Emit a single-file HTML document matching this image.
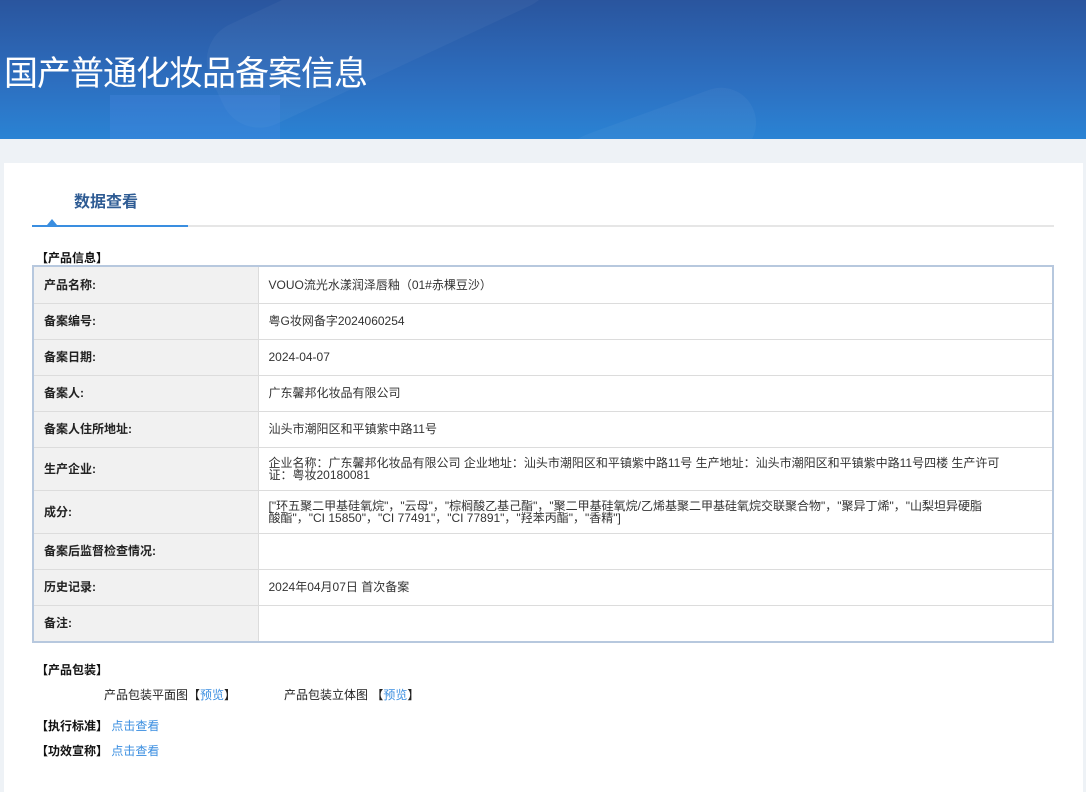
<!DOCTYPE html>
<html><head><meta charset="utf-8"><style>
*{margin:0;padding:0;box-sizing:border-box}
body{width:1086px;height:792px;overflow:hidden;background:#eef2f6;font-family:"Liberation Sans","Noto Sans CJK SC",sans-serif;font-size:12px;color:#333}
.hd{position:absolute;left:0;top:0;width:1086px;height:139px;background:linear-gradient(180deg,#2a559e 0%,#2d6fc0 60%,#2a83d4 100%);overflow:hidden}
.hd h1{position:absolute;left:4px;top:46px;font-size:34px;font-weight:normal;color:#fff;letter-spacing:-1px;font-family:"Noto Sans CJK SC",sans-serif}
.blob{position:absolute;border-radius:40px;background:rgba(255,255,255,.04)}
.panel{position:absolute;left:4px;top:163px;width:1079px;height:629px;background:#fff}
.tab{position:absolute;left:74px;top:188px;font-size:16px;font-weight:bold;color:#2f5c94}
.line{position:absolute;left:32px;top:225px;width:1022px;height:2px;background:#e6e6e6}
.line b{position:absolute;left:0;top:0;width:156px;height:2px;background:#3a8ee0}
.tri{position:absolute;left:47px;top:219px;width:0;height:0;border-left:5px solid transparent;border-right:5px solid transparent;border-bottom:6px solid #3a8ee0}
.sec{position:absolute;left:36px;font-weight:bold;color:#111;font-size:12px}
table{position:absolute;left:32px;top:265px;width:1022px;border-collapse:collapse;border:2px solid #b7c8de}
td{border:1px solid #dcdcdc;padding:0 10px;vertical-align:middle;font-size:12px;line-height:12px}
td.l{width:225px;background:#f1f1f1;font-weight:bold;color:#222}
td.v{color:#333}
a{color:#3a8ee0;text-decoration:none}
.t{position:absolute;font-size:12px;color:#222}
</style></head><body>
<div class="hd">
<div class="blob" style="left:200px;top:-40px;width:360px;height:110px;transform:rotate(-25deg)"></div>
<div class="blob" style="left:110px;top:95px;width:170px;height:60px;border-radius:0;background:rgba(80,140,230,.25)"></div>
<div class="blob" style="left:560px;top:110px;width:200px;height:70px;transform:rotate(-20deg)"></div>
<h1>国产普通化妆品备案信息</h1>
</div>
<div class="panel"></div>
<div class="tab">数据查看</div>
<div class="line"><b></b></div>
<div class="tri"></div>
<div class="sec" style="top:249px">【产品信息】</div>
<table>
<tr style="height:37px"><td class="l">产品名称:</td><td class="v">VOUO流光水漾润泽唇釉（01#赤棵豆沙）</td></tr>
<tr style="height:36px"><td class="l">备案编号:</td><td class="v">粤G妆网备字2024060254</td></tr>
<tr style="height:36px"><td class="l">备案日期:</td><td class="v">2024-04-07</td></tr>
<tr style="height:36px"><td class="l">备案人:</td><td class="v">广东馨邦化妆品有限公司</td></tr>
<tr style="height:36px"><td class="l">备案人住所地址:</td><td class="v">汕头市潮阳区和平镇紫中路11号</td></tr>
<tr style="height:43px"><td class="l">生产企业:</td><td class="v">企业名称：广东馨邦化妆品有限公司 企业地址：汕头市潮阳区和平镇紫中路11号 生产地址：汕头市潮阳区和平镇紫中路11号四楼 生产许可<br>证：粤妆20180081</td></tr>
<tr style="height:43px"><td class="l">成分:</td><td class="v">["环五聚二甲基硅氧烷"，"云母"，"棕榈酸乙基己酯"，"聚二甲基硅氧烷/乙烯基聚二甲基硅氧烷交联聚合物"，"聚异丁烯"，"山梨坦异硬脂<br>酸酯"，"CI 15850"，"CI 77491"，"CI 77891"，"羟苯丙酯"，"香精"]</td></tr>
<tr style="height:36px"><td class="l">备案后监督检查情况:</td><td class="v"></td></tr>
<tr style="height:36px"><td class="l">历史记录:</td><td class="v">2024年04月07日 首次备案</td></tr>
<tr style="height:37px"><td class="l">备注:</td><td class="v"></td></tr>
</table>
<div class="sec" style="top:661px">【产品包装】</div>
<div class="t" style="left:104px;top:686px">产品包装平面图【<a>预览</a>】</div>
<div class="t" style="left:284px;top:686px">产品包装立体图 【<a>预览</a>】</div>
<div class="sec" style="top:717px">【执行标准】 <a style="font-weight:normal">点击查看</a></div>
<div class="sec" style="top:742px">【功效宣称】 <a style="font-weight:normal">点击查看</a></div>
</body></html>
